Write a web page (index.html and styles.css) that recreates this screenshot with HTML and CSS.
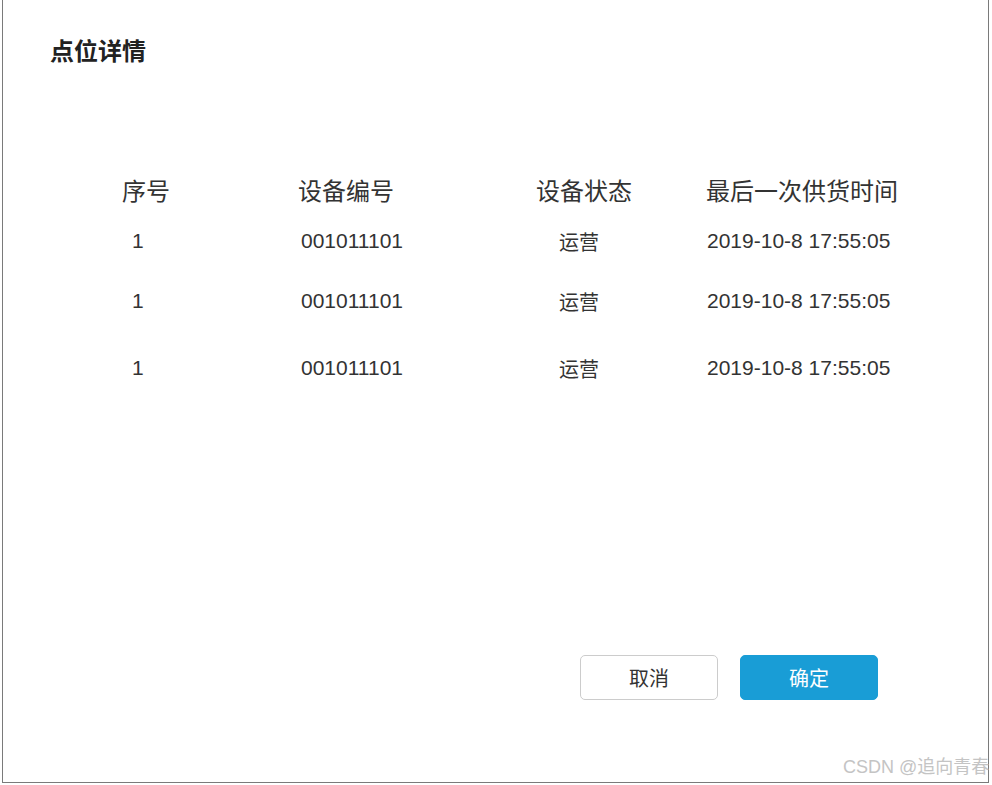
FILE: index.html
```html
<!DOCTYPE html>
<html lang="zh-CN">
<head>
<meta charset="utf-8">
<title>点位详情</title>
<link rel="stylesheet" href="styles.css">
</head>
<body>
<div class="dialog">
  <h2 class="title">点位详情</h2>
  <div class="table">
    <div class="row head">
      <div class="c1">序号</div>
      <div class="c2">设备编号</div>
      <div class="c3">设备状态</div>
      <div class="c4">最后一次供货时间</div>
    </div>
    <div class="row data r1">
      <div class="c1">1</div>
      <div class="c2">001011101</div>
      <div class="c3 cjk">运营</div>
      <div class="c4">2019-10-8 17:55:05</div>
    </div>
    <div class="row data r2">
      <div class="c1">1</div>
      <div class="c2">001011101</div>
      <div class="c3 cjk">运营</div>
      <div class="c4">2019-10-8 17:55:05</div>
    </div>
    <div class="row data r3">
      <div class="c1">1</div>
      <div class="c2">001011101</div>
      <div class="c3 cjk">运营</div>
      <div class="c4">2019-10-8 17:55:05</div>
    </div>
  </div>
  <div class="footer">
    <button class="btn btn-cancel">取消</button>
    <button class="btn btn-ok">确定</button>
  </div>
</div>
<div class="watermark">CSDN @追向青春</div>
</body>
</html>
```

FILE: styles.css
```css
html, body {
  margin: 0;
  padding: 0;
  background: #ffffff;
}
body {
  font-family: "Liberation Sans", "Noto Sans CJK SC", sans-serif;
  color: #333333;
  position: relative;
  width: 992px;
  height: 785px;
  overflow: hidden;
}
.dialog {
  box-sizing: border-box;
  margin-left: 2px;
  width: 987px;
  height: 783px;
  border: 1px solid #7a7a7a;
  border-top: none;
  display: flex;
  flex-direction: column;
  padding-top: 38px;
}
.title {
  margin: 0 0 0 47px;
  font-family: "Noto Sans CJK SC", sans-serif;
  font-size: 24px;
  line-height: 24px;
  font-weight: 700;
  color: #222222;
}
.table {
  margin: 116px 0 0 119px;
}
.row {
  display: grid;
  grid-template-columns: 176px 238px 170px 1fr;
  align-items: start;
}
.head {
  font-family: "Noto Sans CJK SC", sans-serif;
  font-size: 24px;
  line-height: 24px;
  color: #333333;
}
.data {
  font-size: 21px;
  line-height: 21px;
  color: #333333;
}
.r1 { margin-top: 28px; }
.r2 { margin-top: 38px; }
.r3 { margin-top: 45px; }
.data .c1 { padding-left: 10px; }
.data .c2 { padding-left: 3px; }
.data .c3 { padding-left: 23px; }
.data .c4 { padding-left: 1px; }
.data .cjk {
  font-family: "Noto Sans CJK SC", sans-serif;
  font-size: 20px;
  line-height: 20px;
  padding-top: 2px;
}
.footer {
  margin-top: auto;
  display: flex;
  justify-content: flex-end;
  gap: 22px;
  padding: 0 110px 82px 0;
}
.btn {
  box-sizing: border-box;
  width: 138px;
  height: 45px;
  border-radius: 5px;
  font-family: "Noto Sans CJK SC", sans-serif;
  font-size: 20px;
  line-height: 20px;
  padding: 0;
  cursor: pointer;
}
.btn-cancel {
  background: #ffffff;
  border: 1px solid #cccccc;
  color: #333333;
}
.btn-ok {
  background: #199dd6;
  border: 1px solid #199dd6;
  color: #ffffff;
}
.watermark {
  position: absolute;
  left: 843px;
  top: 756px;
  font-family: "Liberation Sans", "Noto Sans CJK SC", sans-serif;
  font-size: 18px;
  line-height: 22px;
  color: #c4c4c4;
  white-space: nowrap;
}
```
